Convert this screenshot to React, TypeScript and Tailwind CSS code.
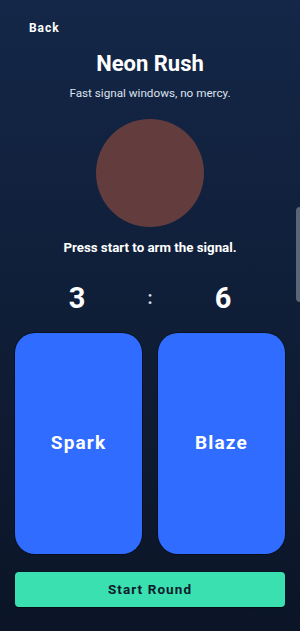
export default function App() {
  return (
    <div
      className="relative flex h-[631px] flex-col bg-gradient-to-b from-[#142748] to-[#0b1527] text-white"
      style={{ fontFamily: 'Roboto, "Noto Sans", sans-serif' }}
    >
      <div className="pl-[29px] pt-[15px]">
        <button className="text-[12px] font-bold tracking-[0.08em] text-white">Back</button>
      </div>
      <h1 className="mt-[13px] text-center text-[22px] font-bold leading-[24px]">Neon Rush</h1>
      <p className="mt-[10px] text-center text-[11.7px] leading-[14px] text-[#dde2ec]">Fast signal windows, no mercy.</p>
      <div className="mx-auto mt-[19px] h-[108px] w-[108px] rounded-full bg-[#633c3e]" />
      <p className="mt-[13px] text-center text-[13.3px] font-bold leading-[16px]">Press start to arm the signal.</p>
      <div className="mx-auto mt-[26px] grid w-[219px] grid-cols-3 items-center text-center">
        <span className="text-[29px] font-bold leading-[32px]">3</span>
        <span className="text-[18px] font-bold leading-[32px] text-[#d6dcec]">:</span>
        <span className="text-[29px] font-bold leading-[32px]">6</span>
      </div>
      <div className="mt-[19px] grid grid-cols-2 gap-[16px] px-[15px]">
        {['Spark', 'Blaze'].map(l => (
          <button
            key={l}
            className="flex h-[221px] items-center justify-center rounded-[20px] bg-[#2f6cff] text-[19px] font-bold tracking-[0.06em] text-white shadow-[0_0_0_1px_rgba(0,0,0,0.35)]"
          >
            {l}
          </button>
        ))}
      </div>
      <div className="mt-[18px] px-[15px]">
        <button className="h-[35px] w-full rounded-[4px] bg-[#3ae0b0] text-[13.5px] font-bold tracking-[0.08em] text-[#0d1a2a] shadow-[0_1px_1px_rgba(0,0,0,0.5)]">
          Start Round
        </button>
      </div>
      <div className="absolute right-0 top-[207px] h-[95px] w-[4px] rounded-l-full bg-[#5b6579]" />
    </div>
  )
}
